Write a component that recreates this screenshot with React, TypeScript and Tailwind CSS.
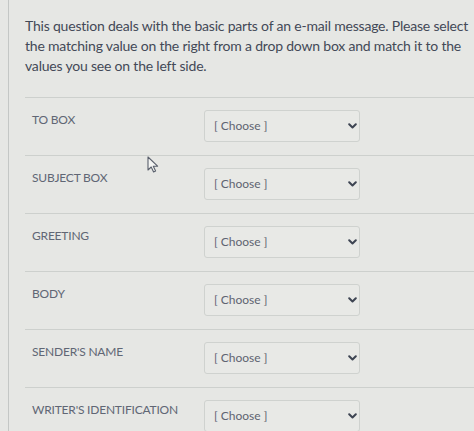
import React from "react";

const labels = [
  "To Box",
  "Subject Box",
  "Greeting",
  "Body",
  "Sender's Name",
  "Writer's Identification",
];

function Chevron() {
  return (
    <svg width="9" height="6" viewBox="0 0 9 6" fill="none">
      <path
        d="M1.2 1.2 L4.5 4.5 L7.8 1.2"
        stroke="#3d4452"
        strokeWidth="2"
        strokeLinecap="round"
        strokeLinejoin="round"
      />
    </svg>
  );
}

function Cursor() {
  return (
    <svg
      className="absolute left-[147px] top-[156px]"
      width="12"
      height="17"
      viewBox="0 0 12 17"
    >
      <path
        d="M1 1 L1 14 L4.2 11 L6.6 16 L8.6 15.1 L6.3 10.2 L10.6 10.2 Z"
        fill="#f4f5f3"
        stroke="#5a606c"
        strokeWidth="1.1"
        strokeLinejoin="round"
      />
    </svg>
  );
}

export default function App() {
  return (
    <div className="relative w-[474px] h-[431px] overflow-hidden bg-[#e6e7e4] font-['Lato','Liberation_Sans',sans-serif]">
      <div className="ml-[8px] h-full border-l border-[#c4c7c5] pl-[16px] pt-[16px]">
        <p className="text-[14px] leading-[20px] tracking-[-0.2px] text-[#434957] pr-[4px]">
          This question deals with the basic parts of an e-mail message. Please select
          the matching value on the right from a drop down box and match it to the
          values you see on the left side.
        </p>
        <div className="mt-[21px]">
          {labels.map((label) => (
            <div
              key={label}
              className="flex items-start border-t border-[#cdd0cd] pt-[12px] pb-[13px]"
            >
              <div className="w-[179px] pl-[7px] text-[12px] leading-[20px] tracking-[-0.2px] text-[#606674] uppercase">
                {label}
              </div>
              <div className="flex h-[32px] w-[156px] items-center justify-between rounded-[3px] border border-[#cfd2cf] bg-[#e8e9e6] pl-[9px] pr-[2px] text-[12px] text-[#5e6471]">
                <span>[ Choose ]</span>
                <Chevron />
              </div>
            </div>
          ))}
        </div>
      </div>
      <Cursor />
    </div>
  );
}
